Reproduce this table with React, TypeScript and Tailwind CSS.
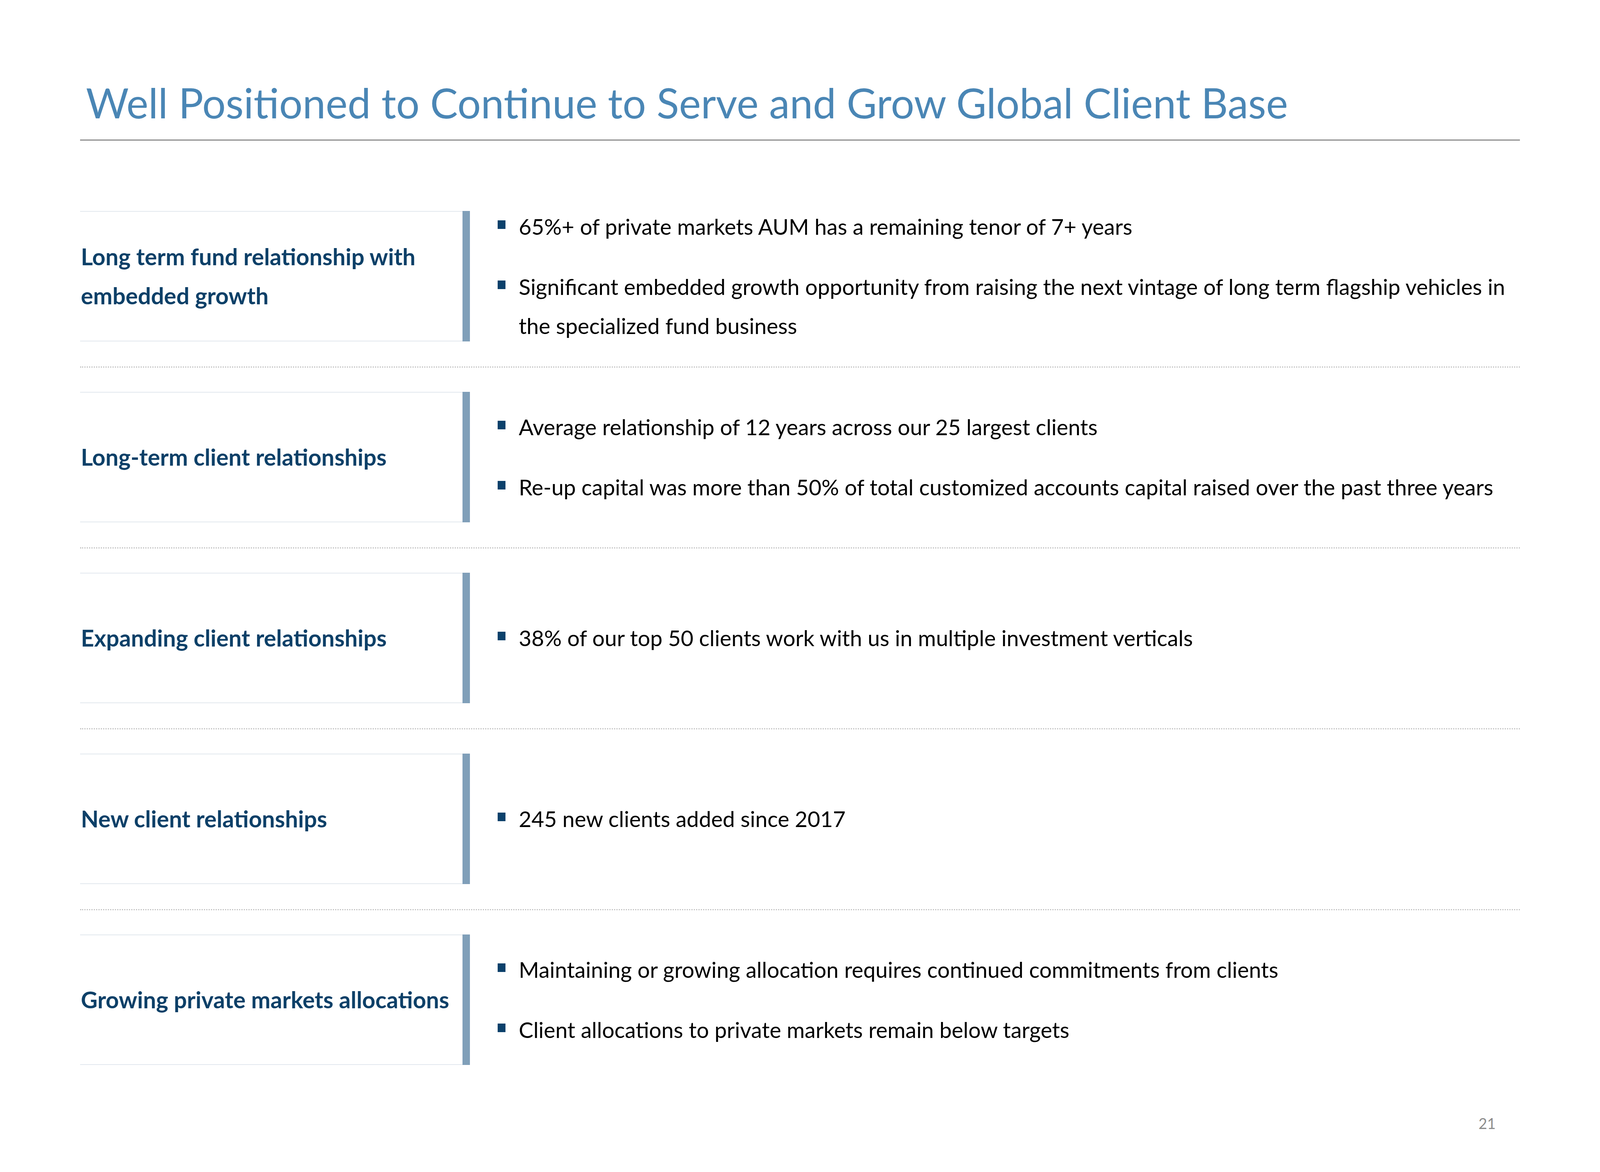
import React from "react";

type Row = {
  title: string[];
  bullets: string[][];
};

const rows: Row[] = [
  {
    title: ["Long term fund relationship with", "embedded growth"],
    bullets: [
      ["65%+ of private markets AUM has a remaining tenor of 7+ years"],
      [
        "Significant embedded growth opportunity from raising the next vintage of long term flagship vehicles in",
        "the specialized fund business",
      ],
    ],
  },
  {
    title: ["Long-term client relationships"],
    bullets: [
      ["Average relationship of 12 years across our 25 largest clients"],
      ["Re-up capital was more than 50% of total customized accounts capital raised over the past three years"],
    ],
  },
  {
    title: ["Expanding client relationships"],
    bullets: [["38% of our top 50 clients work with us in multiple investment verticals"]],
  },
  {
    title: ["New client relationships"],
    bullets: [["245 new clients added since 2017"]],
  },
  {
    title: ["Growing private markets allocations"],
    bullets: [
      ["Maintaining or growing allocation requires continued commitments from clients"],
      ["Client allocations to private markets remain below targets"],
    ],
  },
];

function Lines({ lines }: { lines: string[] }) {
  return (
    <>
      {lines.map((line, i) => (
        <React.Fragment key={i}>
          {i > 0 && <br />}
          {line}
        </React.Fragment>
      ))}
    </>
  );
}

function Separator() {
  return (
    <div className="pt-[64px] pb-[62px]">
      <div className="border-t-[3px] border-dotted border-[#c4c4c4]" />
    </div>
  );
}

function ClientRow({ row }: { row: Row }) {
  return (
    <div className="flex h-[334px]">
      <div className="flex w-[979px] items-center border-y-2 border-[#e2e8ee] pl-[2px]">
        <p className="whitespace-nowrap text-[59px] font-bold leading-[100px] text-[#0d4068]">
          <Lines lines={row.title} />
        </p>
      </div>
      <div className="w-[19px] bg-[#809fb9]" />
      <div className="flex flex-1 flex-col justify-center gap-[54px] pl-[71px]">
        {row.bullets.map((lines, i) => (
          <div key={i} className="flex items-start">
            <span className="mt-[34px] h-[22px] w-[20px] shrink-0 bg-[#0b416b]" />
            <p className="ml-[34px] whitespace-nowrap text-[56px] leading-[100px] text-black">
              <Lines lines={lines} />
            </p>
          </div>
        ))}
      </div>
    </div>
  );
}

export default function App() {
  return (
    <div className="flex h-[3000px] w-full flex-col bg-white font-['Lato','Open_Sans',sans-serif]">
      <h1 className="whitespace-nowrap pl-[220px] pt-[192px] text-[106px] font-normal leading-[140px] text-[#4a86b5]">
        Well Positioned to Continue to Serve and Grow Global Client Base
      </h1>
      <div className="ml-[205px] mt-[25px] h-[3px] w-[3686px] bg-[#8e8e8e]" />

      <div className="ml-[205px] mt-[180px] w-[3686px]">
        {rows.map((row, i) => (
          <React.Fragment key={i}>
            {i > 0 && <Separator />}
            <ClientRow row={row} />
          </React.Fragment>
        ))}
      </div>

      <div className="mt-[119px] pr-[267px] text-right text-[38px] leading-[60px] text-[#8c8c8c]">21</div>
    </div>
  );
}
